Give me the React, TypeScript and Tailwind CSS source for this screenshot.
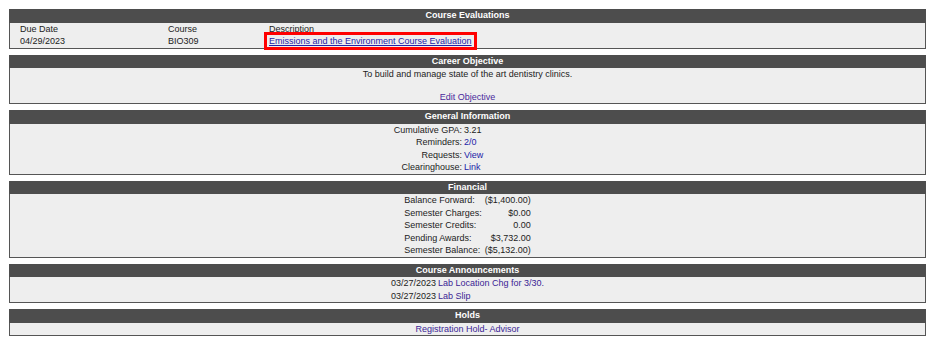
const generalInfo = [
  { label: "Cumulative GPA:", value: "3.21", link: false },
  { label: "Reminders:", value: "2/0", link: true },
  { label: "Requests:", value: "View", link: true },
  { label: "Clearinghouse:", value: "Link", link: true },
];

const financial = [
  { label: "Balance Forward:", value: "($1,400.00)" },
  { label: "Semester Charges:", value: "$0.00" },
  { label: "Semester Credits:", value: "0.00" },
  { label: "Pending Awards:", value: "$3,732.00" },
  { label: "Semester Balance:", value: "($5,132.00)" },
];

const announcements = [
  { date: "03/27/2023", title: "Lab Location Chg for 3/30." },
  { date: "03/27/2023", title: "Lab Slip" },
];

function Panel({ title, children }: { title: string; children: React.ReactNode }) {
  return (
    <section className="border-x border-b border-[#555]">
      <div className="h-[13.5px] bg-[#4d4d4d] text-white font-bold text-center leading-[13.5px] -mx-px px-px">
        {title}
      </div>
      <div className="bg-[#eeeeee]">{children}</div>
    </section>
  );
}

export default function App() {
  return (
    <div
      className="w-[936px] h-[346px] bg-white pl-[9px] pr-[10px] pt-[9px] text-[9px] leading-[12.5px] text-[#1c1c1c] flex flex-col gap-[6px]"
      style={{ fontFamily: '"Liberation Sans", Arial, sans-serif' }}
    >
      <Panel title="Course Evaluations">
        <div className="grid grid-cols-[148px_101px_1fr] pl-[10px]">
          <div>Due Date</div>
          <div>Course</div>
          <div>Description</div>
          <div>04/29/2023</div>
          <div>BIO309</div>
          <div>
            <span className="relative">
              <a href="#" className="underline text-[#2323a8]">
                Emissions and the Environment Course Evaluation
              </a>
              {/* highlight annotation */}
              <span className="absolute -left-[5px] -right-[5px] -top-[4px] -bottom-[4px] border-[3px] border-[#ff0000] pointer-events-none" />
            </span>
          </div>
        </div>
      </Panel>

      <Panel title="Career Objective">
        <div className="text-center">
          <div>To build and manage state of the art dentistry clinics.</div>
          <div className="h-[10px]" />
          <a href="#" className="text-[#4a2a9c]">Edit Objective</a>
        </div>
      </Panel>

      <Panel title="General Information">
        <div className="grid grid-cols-[452px_1fr] gap-x-[2px]">
          {generalInfo.map((row) => (
            <div key={row.label} className="contents">
              <div className="text-right">{row.label}</div>
              <div className={row.link ? "text-[#2323a8]" : ""}>{row.value}</div>
            </div>
          ))}
        </div>
      </Panel>

      <Panel title="Financial">
        <div className="mx-auto w-max grid grid-cols-[auto_auto] gap-x-[3px]">
          {financial.map((row) => (
            <div key={row.label} className="contents">
              <div>{row.label}</div>
              <div className="text-right">{row.value}</div>
            </div>
          ))}
        </div>
      </Panel>

      <Panel title="Course Announcements">
        <div className="mx-auto w-max grid grid-cols-[auto_auto] gap-x-[2px]">
          {announcements.map((row) => (
            <div key={row.title} className="contents">
              <div>{row.date}</div>
              <a href="#" className="text-[#3b2595]">{row.title}</a>
            </div>
          ))}
        </div>
      </Panel>

      <Panel title="Holds">
        <div className="text-center">
          <a href="#" className="text-[#3b2595]">Registration Hold- Advisor</a>
        </div>
      </Panel>
    </div>
  );
}
